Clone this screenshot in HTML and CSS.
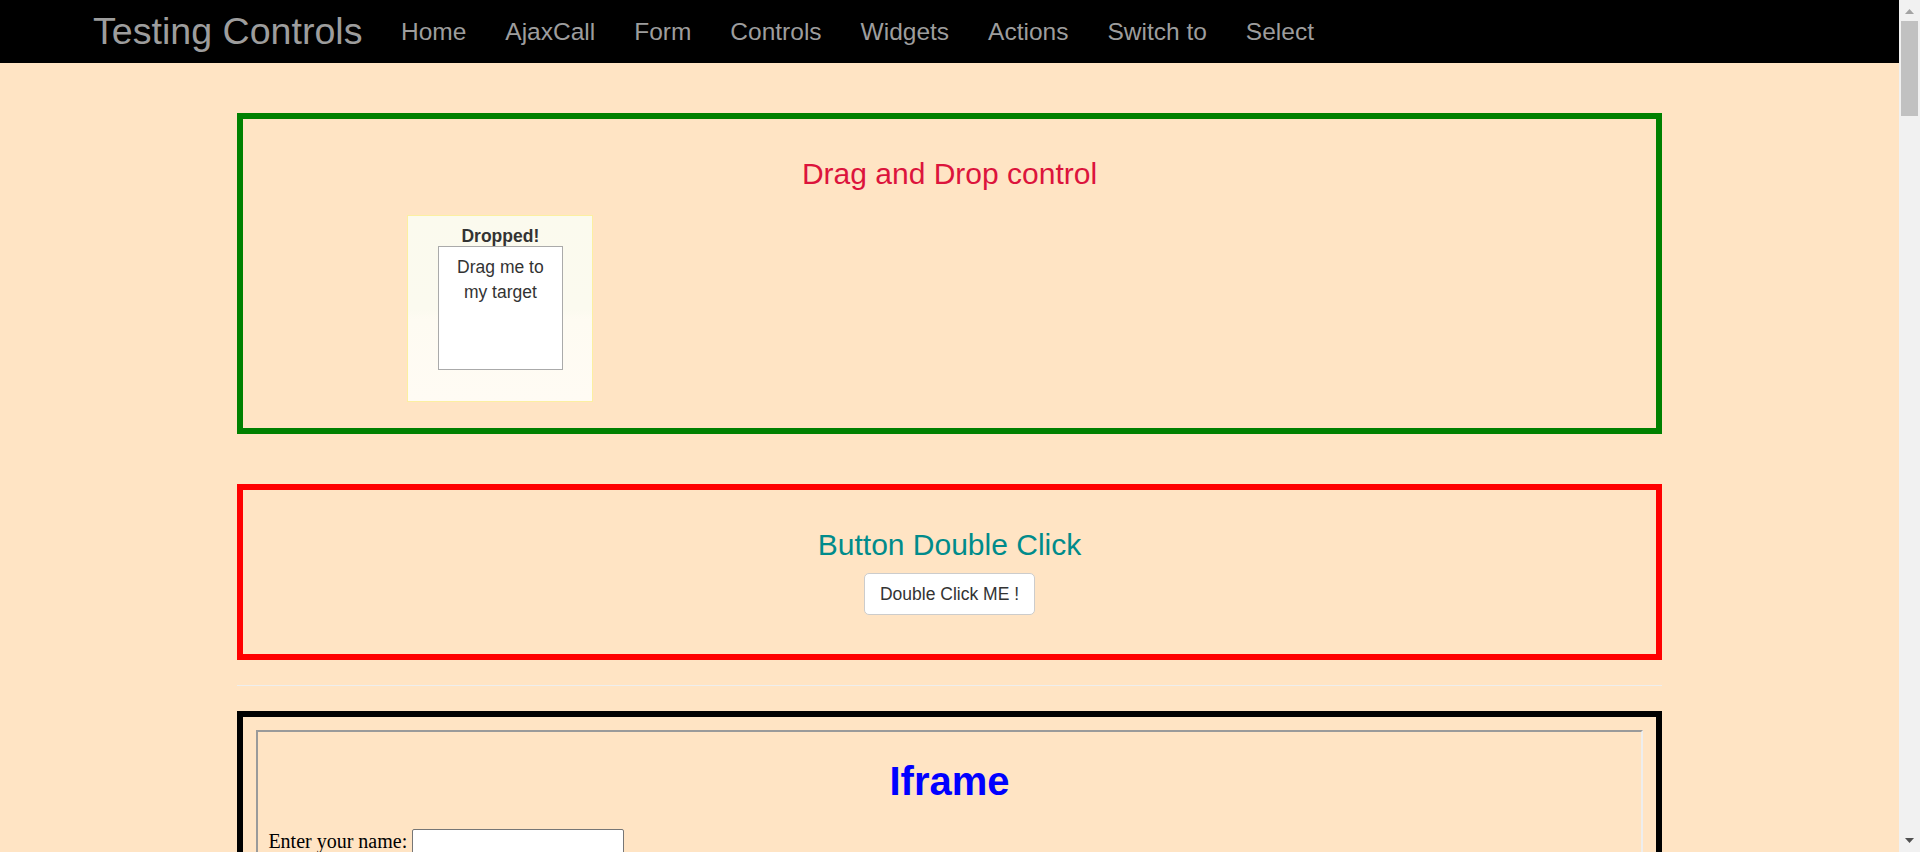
FILE: index.html
```html
<!DOCTYPE html>
<html lang="en">
<head>
<meta charset="utf-8">
<title>Testing Controls</title>
<link rel="stylesheet" href="styles.css">
</head>
<body>
<div class="window">
  <div class="viewport">
    <nav class="navbar">
      <a class="brand" href="#">Testing Controls</a>
      <ul class="nav">
        <li><a href="#">Home</a></li>
        <li><a href="#">AjaxCall</a></li>
        <li><a href="#">Form</a></li>
        <li><a href="#">Controls</a></li>
        <li><a href="#">Widgets</a></li>
        <li><a href="#">Actions</a></li>
        <li><a href="#">Switch to</a></li>
        <li><a href="#">Select</a></li>
      </ul>
    </nav>
    <main class="container">
      <section class="box box-green">
        <h3 class="title title-crimson">Drag and Drop control</h3>
        <div class="droppable">
          <p class="dropped">Dropped!</p>
          <div class="draggable">Drag me to my target</div>
        </div>
      </section>

      <section class="box box-red">
        <h3 class="title title-teal">Button Double Click</h3>
        <div class="btn-row">
          <button class="btn" type="button">Double Click ME !</button>
        </div>
      </section>

      <hr class="divider">

      <section class="box box-black">
        <div class="frame">
          <div class="frame-body">
            <h1 class="frame-title">Iframe</h1>
            <p class="frame-line">Enter your name: <input class="frame-input" type="text"></p>
          </div>
        </div>
      </section>
    </main>
  </div>
  <div class="scrollbar">
    <div class="sb-arrow">
      <svg width="9" height="5" viewBox="0 0 9 5"><polygon points="4.5,0 9,5 0,5" fill="#a3a3a3"/></svg>
    </div>
    <div class="sb-track"><div class="sb-thumb"></div></div>
    <div class="sb-arrow sb-arrow-down">
      <svg width="9" height="5" viewBox="0 0 9 5"><polygon points="0,0 9,0 4.5,5" fill="#505050"/></svg>
    </div>
  </div>
</div>
</body>
</html>
```

FILE: styles.css
```css
* { box-sizing: border-box; }

html, body {
  margin: 0;
  padding: 0;
  height: 100%;
  overflow: hidden;
}

body {
  background: #ffe4c4;
  font-family: "Liberation Sans", Arial, Helvetica, sans-serif;
  font-size: 17.5px;
  line-height: 25px;
  color: #333;
}

.window {
  display: flex;
  height: 852px;
}

.viewport {
  flex: 1;
  min-width: 0;
  height: 852px;
  overflow: hidden;
}

/* Navbar */
.navbar {
  display: flex;
  align-items: flex-start;
  height: 63px;
  background: #000;
  padding-left: 93px;
}

.brand {
  font-size: 37.6px;
  line-height: 63px;
  color: #9d9d9d;
  text-decoration: none;
  margin-right: 19px;
}

.nav {
  display: flex;
  list-style: none;
  margin: 0;
  padding: 0;
}

.nav a {
  display: block;
  padding: 0 19.5px;
  font-size: 24.5px;
  line-height: 63px;
  color: #9d9d9d;
  text-decoration: none;
}

/* Content */
.container {
  width: 75%;
  margin: 0 auto;
  padding-top: 50px;
}

.box {
  border: 6px solid;
  padding: 13px;
}

.box-green { border-color: #008000; }
.box-red { border-color: #ff0000; margin-top: 50px; }
.box-black { border-color: #000; height: 400px; }

.title {
  margin: 25px 0 12.5px;
  font-size: 30px;
  line-height: 33px;
  font-weight: 400;
  text-align: center;
}

.title-crimson { color: #dc143c; }
.title-teal { color: #008b8b; }

.droppable {
  width: 186px;
  height: 187px;
  margin: 25px 0 12.5px 151px;
  border: 1px solid #fcefa1;
  background: linear-gradient(#fbfaee 0%, #fbfaef 50%, #fefbf2 56%, #fffbf4 100%);
  padding-top: 10px;
  display: flex;
  flex-direction: column;
  align-items: center;
}

.dropped {
  margin: 0;
  font-weight: 700;
  line-height: 20px;
  color: #333;
}

.draggable {
  width: 125px;
  height: 124px;
  border: 1px solid #aaa;
  background: #fff;
  padding: 8px 10px;
  text-align: center;
  color: #333;
}

.btn-row {
  display: flex;
  justify-content: center;
  margin-bottom: 26px;
}

.btn {
  font-family: "Liberation Sans", Arial, Helvetica, sans-serif;
  font-size: 17.5px;
  line-height: 25px;
  padding: 7.5px 15px;
  color: #333;
  background: #fff;
  border: 1px solid #ccc;
  border-radius: 5px;
}

.divider {
  margin: 25px 0;
  border: 0;
  border-top: 1px solid #eee;
}

/* Iframe imitation */
.frame {
  width: 100%;
  height: 360px;
  border-style: solid;
  border-width: 2px;
  border-color: #9a9a9a #eeeeee #eeeeee #9a9a9a;
}

.frame-body {
  padding: 0 10px;
  font-family: "Liberation Serif", "Times New Roman", serif;
  font-size: 20px;
  line-height: normal;
  color: #000;
}

.frame-title {
  margin: 0;
  padding-top: 26px;
  margin-bottom: 25px;
  font-family: "Liberation Sans", Arial, sans-serif;
  font-size: 40px;
  line-height: 46px;
  font-weight: 700;
  color: #0000ff;
  text-align: center;
}

.frame-line {
  margin: 0;
}

.frame-input {
  width: 212px;
  height: 27px;
  border: 1px solid #767676;
  border-radius: 2px;
  background: #fff;
  font-size: 16.7px;
  vertical-align: baseline;
}

/* Scrollbar */
.scrollbar {
  width: 21px;
  height: 852px;
  background: #f1f1f1;
  display: flex;
  flex-direction: column;
}

.sb-arrow {
  height: 21px;
  display: flex;
  justify-content: center;
  padding-top: 9px;
}

.sb-arrow-down {
  padding-top: 7px;
}

.sb-track {
  flex: 1;
  padding: 0 2px;
}

.sb-thumb {
  height: 95px;
  background: #c1c1c1;
}
```
